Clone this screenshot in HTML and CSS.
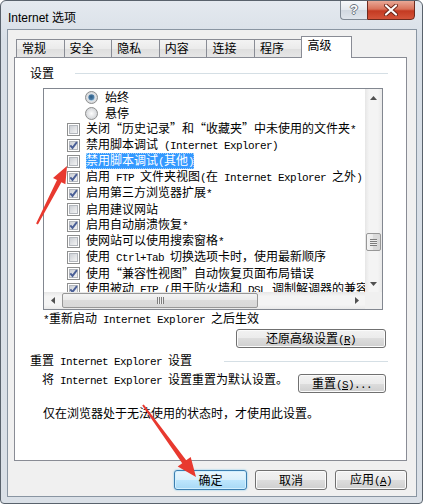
FILE: index.html
```html
<!DOCTYPE html>
<html lang="zh-CN">

<head>
    <meta charset="UTF-8">
    <meta name="viewport" content="width=device-width, initial-scale=1.0">
    <title>Internet 选项</title>
    <link rel="stylesheet" href="styles.css">
</head>

<body>

    <!-- shared little pictures: boxes, radios, scroll arrows -->
    <svg class="defs" width="0" height="0">
        <defs>
            <linearGradient id="cbfill" x1="0" y1="0" x2="1" y2="1">
                <stop offset="0" stop-color="#c9cdd3" />
                <stop offset="1" stop-color="#f6f6f6" />
            </linearGradient>
            <radialGradient id="rdfill" cx="0.5" cy="0.5" r="0.6">
                <stop offset="0" stop-color="#fdfdfd" />
                <stop offset="1" stop-color="#c9ccd0" />
            </radialGradient>
            <radialGradient id="rddot" cx="0.45" cy="0.4" r="0.6">
                <stop offset="0" stop-color="#2b5c86" />
                <stop offset="0.7" stop-color="#4f7ea6" />
                <stop offset="1" stop-color="#9cc4e2" />
            </radialGradient>
        </defs>
        <symbol id="cb" viewBox="0 0 13 13">
            <rect x="0.5" y="0.5" width="12" height="12" fill="#fff" stroke="#8e8f8f" />
            <rect x="2.5" y="2.5" width="8" height="8" fill="url(#cbfill)" stroke="#b3b7bd" />
        </symbol>
        <symbol id="cb-on" viewBox="0 0 13 13">
            <use href="#cb" />
            <path d="M3.3 6.3 L5.5 8.9 L9.9 3.2" fill="none" stroke="#4a5f97" stroke-width="1.9" />
        </symbol>
        <symbol id="rd" viewBox="0 0 13 13">
            <circle cx="6.5" cy="6.5" r="6" fill="url(#rdfill)" stroke="#8e8f8f" />
        </symbol>
        <symbol id="rd-on" viewBox="0 0 13 13">
            <use href="#rd" />
            <circle cx="6.5" cy="6.5" r="3.2" fill="url(#rddot)" />
        </symbol>
        <symbol id="ar-up" viewBox="0 0 7 4"><path d="M3.5 0 L7 4 L0 4 Z" fill="#505050" /></symbol>
        <symbol id="ar-down" viewBox="0 0 7 4"><path d="M0 0 L7 0 L3.5 4 Z" fill="#505050" /></symbol>
        <symbol id="ar-left" viewBox="0 0 4 7"><path d="M4 0 L4 7 L0 3.5 Z" fill="#505050" /></symbol>
        <symbol id="ar-right" viewBox="0 0 4 7"><path d="M0 0 L4 3.5 L0 7 Z" fill="#505050" /></symbol>
    </svg>

    <div class="window">

        <div class="titlebar">
            <span class="title">Internet 选项</span>
            <div class="caption-btns">
                <span class="cap-help">?</span>
                <span class="cap-close">
                    <svg width="14" height="12" viewBox="0 0 14 12">
                        <path d="M2 1.5 L12 10.5 M12 1.5 L2 10.5" stroke="#6b2518" stroke-width="4" stroke-linecap="round" />
                        <path d="M2 1.5 L12 10.5 M12 1.5 L2 10.5" stroke="#ffffff" stroke-width="2.2" stroke-linecap="round" />
                    </svg>
                </span>
            </div>
        </div>

        <div class="client">

            <div class="tabs">
                <div class="tab">常规</div>
                <div class="tab">安全</div>
                <div class="tab">隐私</div>
                <div class="tab">内容</div>
                <div class="tab">连接</div>
                <div class="tab">程序</div>
                <div class="tab active">高级</div>
            </div>

            <div class="panel">

                <div class="group-head">
                    <span>设置</span>
                    <span class="rule"></span>
                </div>

                <div class="listbox">
                    <div class="rows">
                        <div class="row sub"><svg class="box rd"><use href="#rd-on" /></svg><span>始终</span></div>
                        <div class="row sub"><svg class="box rd"><use href="#rd" /></svg><span>悬停</span></div>
                        <div class="row"><svg class="box"><use href="#cb" /></svg><span>关闭“历史记录”和“收藏夹”中未使用的文件夹<span class="en">*</span></span></div>
                        <div class="row"><svg class="box"><use href="#cb-on" /></svg><span>禁用脚本调试<span class="en"> (Internet Explorer)</span></span></div>
                        <div class="row"><svg class="box"><use href="#cb" /></svg><span class="sel">禁用脚本调试<span class="en">(</span>其他<span class="en">)</span></span></div>
                        <div class="row"><svg class="box"><use href="#cb-on" /></svg><span>启用<span class="en"> FTP </span>文件夹视图<span class="en">(</span>在<span class="en"> Internet Explorer </span>之外<span class="en">)</span></span></div>
                        <div class="row"><svg class="box"><use href="#cb-on" /></svg><span>启用第三方浏览器扩展<span class="en">*</span></span></div>
                        <div class="row"><svg class="box"><use href="#cb" /></svg><span>启用建议网站</span></div>
                        <div class="row"><svg class="box"><use href="#cb-on" /></svg><span>启用自动崩溃恢复<span class="en">*</span></span></div>
                        <div class="row"><svg class="box"><use href="#cb" /></svg><span>使网站可以使用搜索窗格<span class="en">*</span></span></div>
                        <div class="row"><svg class="box"><use href="#cb" /></svg><span>使用<span class="en"> Ctrl+Tab </span>切换选项卡时，使用最新顺序</span></div>
                        <div class="row"><svg class="box"><use href="#cb-on" /></svg><span>使用“兼容性视图”自动恢复页面布局错误</span></div>
                        <div class="row"><svg class="box"><use href="#cb-on" /></svg><span>使用被动<span class="en"> FTP (</span>用于防火墙和<span class="en"> DSL </span>调制解调器的兼容性<span class="en">)</span></span></div>
                    </div>

                    <div class="vscroll">
                        <span class="sb-btn"><svg width="7" height="4"><use href="#ar-up" /></svg></span>
                        <div class="track">
                            <div class="thumb"><span class="grip"></span></div>
                        </div>
                        <span class="sb-btn"><svg width="7" height="4"><use href="#ar-down" /></svg></span>
                    </div>

                    <div class="hscroll">
                        <span class="sb-btn"><svg width="4" height="7"><use href="#ar-left" /></svg></span>
                        <div class="track">
                            <div class="thumb"><span class="grip"></span></div>
                        </div>
                        <span class="sb-btn"><svg width="4" height="7"><use href="#ar-right" /></svg></span>
                    </div>

                    <div class="corner"></div>
                </div>

                <div class="note"><span class="en">*</span>重新启动<span class="en"> Internet Explorer </span>之后生效</div>

                <div class="btn-row">
                    <button class="btn btn-restore">还原高级设置<span class="en">(<u>R</u>)</span></button>
                </div>

                <div class="group-head reset-head">
                    <span>重置<span class="en"> Internet Explorer </span>设置</span>
                    <span class="rule"></span>
                </div>

                <div class="reset-row">
                    <span class="reset-text">将<span class="en"> Internet Explorer </span>设置重置为默认设置。</span>
                    <button class="btn btn-reset">重置<span class="en">(<u>S</u>)...</span></button>
                </div>

                <div class="hint">仅在浏览器处于无法使用的状态时，才使用此设置。</div>

            </div>

            <div class="dlg-btns">
                <button class="btn btn-ok">确定</button>
                <button class="btn">取消</button>
                <button class="btn">应用<span class="en">(<u>A</u>)</span></button>
            </div>

        </div>
    </div>

    <!-- red pointer arrows drawn on top of the shot -->
    <svg class="marks" width="423" height="504" viewBox="0 0 423 504">
        <polygon points="36.1,223.5 57.0,180.0 53.0,177.9 67,166 65.4,184.3 61.4,182.2 37.9,224.5" fill="#e8392f" />
        <polygon points="142.2,405.6 182.2,463.3 177.7,466.5 196,477 190.7,457.1 186.2,460.3 143.8,404.4" fill="#e8392f" />
    </svg>

</body>

</html>
```

FILE: styles.css
```css
* {
    box-sizing: border-box;
}

body {
    position: relative;
    margin: 0;
    font-family: "Noto Sans CJK SC", "Liberation Sans", sans-serif;
    font-size: 12px;
    color: #000000;
}

.defs {
    position: absolute;
    width: 0;
    height: 0;
}

/* ascii runs look like the old mono latin of SimSun */
.en {
    font-family: "Liberation Mono", monospace;
    font-size: 11px;
    letter-spacing: -0.6px;
}

.window {
    width: 423px;
    height: 504px;
    border: 1px solid #59626c;
    border-radius: 6px 6px 4px 4px;
    background: linear-gradient(#e4e9ef, #d8dfe7 40px, #dae0e7);
    display: flex;
    flex-direction: column;
    overflow: hidden;
}

.titlebar {
    height: 28px;
    flex-shrink: 0;
    display: flex;
    align-items: center;
    padding-left: 7px;
    padding-right: 7px;
}

.title {
    flex: 1;
    font-family: "Liberation Sans", "Noto Sans CJK SC", sans-serif;
    font-size: 12px;
    padding-top: 2px;
}

.caption-btns {
    align-self: flex-start;
    display: flex;
    margin-top: -1px;
}

.cap-help {
    width: 27px;
    height: 20px;
    border: 1px solid #7f8994;
    border-right: none;
    border-radius: 0 0 0 4px;
    background: linear-gradient(#f6f8fa, #e3e8ee 50%, #d1d8e0 50%, #dfe5ec);
    color: #ffffff;
    font-family: "Liberation Sans", sans-serif;
    font-weight: bold;
    font-size: 13px;
    line-height: 18px;
    text-align: center;
    text-shadow: 1px 0 #6c7580, -1px 0 #6c7580, 0 1px #6c7580, 0 -1px #6c7580;
}

.cap-close {
    width: 48px;
    height: 20px;
    border: 1px solid #6e2a1e;
    border-radius: 0 0 4px 0;
    background: linear-gradient(#e9a896, #d9725a 45%, #c43a22 55%, #d4543a);
    display: flex;
    align-items: center;
    justify-content: center;
}

.client {
    height: 468px;
    margin: 0 5px 0 6px;
    border: 1px solid #8995a2;
    background: #f0f0f0;
    padding-top: 6px;
    display: flex;
    flex-direction: column;
}

/* tab strip */
.tabs {
    height: 21px;
    margin-left: 8px;
    display: flex;
    align-items: flex-end;
    position: relative;
    z-index: 1;
}

.tab {
    width: 48.6px;
    height: 18px;
    margin-right: -1px;
    padding-left: 5px;
    border: 1px solid #898c95;
    border-bottom: none;
    background: linear-gradient(#f3f3f3, #ebebeb 50%, #dedede 50%, #e6e6e6);
    line-height: 16px;
}

.tab.active {
    width: 51px;
    height: 22px;
    margin-left: -1px;
    margin-bottom: -1px;
    padding-left: 6px;
    background: #ffffff;
    line-height: 16px;
}

.panel {
    width: 393px;
    height: 404px;
    margin-left: 6px;
    border: 1px solid #898c95;
    background: #ffffff;
    padding-top: 7px;
}

.group-head {
    height: 16px;
    margin-left: 15px;
    margin-right: 18px;
    display: flex;
    align-items: center;
    line-height: 16px;
}

.group-head .rule {
    flex: 1;
    margin-left: 21px;
    border-top: 1px solid #d5dfe5;
}

.reset-head {
    margin-top: 5px;
}

.reset-head .rule {
    margin-left: 32px;
}

/* list with the option rows */
.listbox {
    width: 340px;
    height: 222px;
    margin: 7px 0 0 28px;
    border: 1px solid #828790;
    display: grid;
    grid-template-columns: 321px 17px;
    grid-template-rows: 203px 17px;
}

.rows {
    overflow: hidden;
}

.row {
    height: 16px;
    display: flex;
    align-items: center;
    padding-left: 23px;
    white-space: nowrap;
    line-height: 16px;
}

.row.sub {
    padding-left: 41px;
}

.box {
    width: 13px;
    height: 13px;
    flex-shrink: 0;
    margin-right: 6px;
}

.box.rd {
    margin-right: 7px;
}

.sel {
    background: #3399ff;
    color: #ffffff;
    line-height: 14px;
    outline: 1px dotted #9fcdf8;
    outline-offset: -1px;
}

.vscroll {
    display: flex;
    flex-direction: column;
    background: linear-gradient(90deg, #e6e6e6, #f4f4f4 25%, #f4f4f4 75%, #e9e9e9);
}

.hscroll {
    display: flex;
    background: linear-gradient(#e6e6e6, #f4f4f4 25%, #f4f4f4 75%, #e9e9e9);
}

.corner {
    background: #f0f0f0;
}

.sb-btn {
    width: 17px;
    height: 17px;
    flex-shrink: 0;
    display: flex;
    align-items: center;
    justify-content: center;
}

.sb-btn svg {
    display: block;
}

.track {
    flex: 1;
}

.vscroll .thumb {
    height: 18px;
    margin: 127px 1px 0 1px;
    border: 1px solid #979797;
    border-radius: 2px;
    background: linear-gradient(90deg, #f4f4f4, #e9e9e9 50%, #dcdcdc 50%, #d8d8d8);
    display: flex;
    align-items: center;
    justify-content: center;
}

.vscroll .grip {
    width: 7px;
    height: 7px;
    background: repeating-linear-gradient(#7d7d7d 0, #7d7d7d 1px, #eeeeee 1px, #eeeeee 2px);
}

.hscroll .thumb {
    width: 196px;
    height: 15px;
    margin: 1px 0 0 1px;
    border: 1px solid #979797;
    border-radius: 2px;
    background: linear-gradient(#f4f4f4, #e9e9e9 50%, #dcdcdc 50%, #d8d8d8);
    display: flex;
    align-items: center;
    justify-content: center;
}

.hscroll .grip {
    width: 7px;
    height: 7px;
    background: repeating-linear-gradient(90deg, #7d7d7d 0, #7d7d7d 1px, #eeeeee 1px, #eeeeee 2px);
}

.note {
    margin-left: 28px;
    line-height: 16px;
    height: 16px;
}

.btn-row {
    display: flex;
    justify-content: flex-end;
    margin-top: 3px;
    margin-right: 20px;
}

.reset-row {
    display: flex;
    justify-content: space-between;
    align-items: flex-start;
    margin: 2px 20px 0 27px;
}

.reset-text {
    line-height: 16px;
}

.hint {
    margin: 12px 0 0 28px;
    line-height: 16px;
}

/* win7 push buttons */
.btn {
    height: 19px;
    padding: 0;
    border: 1px solid #707070;
    border-radius: 3px;
    background: linear-gradient(#f2f2f2, #ebebeb 50%, #dddddd 50%, #cfcfcf);
    box-shadow: inset 0 0 0 1px #fbfbfb;
    font-family: inherit;
    font-size: 12px;
    line-height: 16px;
    color: #000000;
    white-space: nowrap;
}

.btn-restore {
    width: 150px;
}

.btn-reset {
    width: 88px;
    margin-top: 3px;
}

.dlg-btns {
    display: flex;
    justify-content: flex-end;
    gap: 8px;
    margin-top: 9px;
    margin-right: 9px;
}

.dlg-btns .btn {
    width: 72px;
    height: 20px;
}

.dlg-btns .btn-ok {
    width: 73px;
    border-color: #3c7fb1;
    background: linear-gradient(#eaf6fd, #d9f0fc 50%, #bee6fd 50%, #a7d9f5);
    box-shadow: inset 0 0 0 1px #d2f0ff, 0 0 2px #6fc1ec;
}

.marks {
    position: absolute;
    left: 0;
    top: 0;
    pointer-events: none;
}
```
